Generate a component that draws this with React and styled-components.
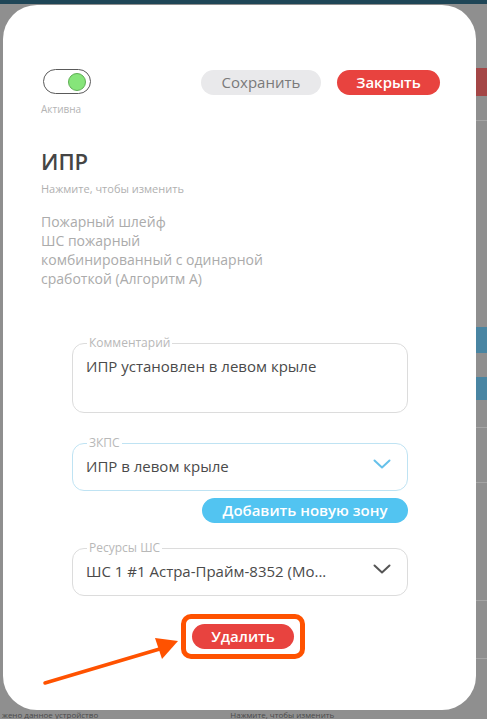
import styled, { createGlobalStyle } from "styled-components";

const GlobalStyle = createGlobalStyle`
  html, body {
    margin: 0;
    padding: 0;
    background: #8f8f8f;
  }
  body {
    font-family: "Open Sans", "Noto Sans", sans-serif;
  }
  * {
    box-sizing: border-box;
  }
`;

function Chevron({ color }) {
  return (
    <svg width="18" height="10" viewBox="0 0 18 10" fill="none">
      <path
        d="M1.5 1.5 L9 8.5 L16.5 1.5"
        stroke={color}
        strokeWidth="2"
        strokeLinecap="round"
        strokeLinejoin="round"
      />
    </svg>
  );
}

function Arrow() {
  return (
    <ArrowLayer width="487" height="719" viewBox="0 0 487 719">
      <line
        x1="45"
        y1="683"
        x2="163"
        y2="648"
        stroke="#ff5200"
        strokeWidth="3.5"
        strokeLinecap="round"
      />
      <polygon points="178,641 155,638 162,659" fill="#ff5200" />
    </ArrowLayer>
  );
}

export default function App() {
  return (
    <>
      <GlobalStyle />
      <Page>
        <Backdrop>
          <TopStrip />
          <BehindRight>
            <BehindTab color="#a83a3a" top={64} height={28} />
            <BehindLine top={24} />
            <BehindTab color="#3d84a6" top={206} height={26} />
            <BehindTab color="#3d84a6" top={24} height={23} />
            <BehindLine top={27} />
            <BehindLine top={54} />
            <BehindLine top={117} />
            <BehindLine top={57} />
          </BehindRight>
          <BehindBottom>
            <span>жено данное устройство</span>
            <span>Нажмите, чтобы изменить</span>
          </BehindBottom>
        </Backdrop>

        <ModalLayer>
          <Modal>
            <HeaderRow>
              <ToggleBlock>
                <Toggle>
                  <Knob />
                </Toggle>
                <SmallLabel>Активна</SmallLabel>
              </ToggleBlock>
              <Actions>
                <PillButton variant="grey" width={120}>
                  Сохранить
                </PillButton>
                <PillButton variant="red" width={103}>
                  Закрыть
                </PillButton>
              </Actions>
            </HeaderRow>

            <Title>ИПР</Title>
            <Hint>Нажмите, чтобы изменить</Hint>
            <Description>
              Пожарный шлейф
              <br />
              ШС пожарный
              <br />
              комбинированный с одинарной
              <br />
              сработкой (Алгоритм А)
            </Description>

            <Fields>
              <Field tall>
                <Legend>Комментарий</Legend>
                <FieldText>ИПР установлен в левом крыле</FieldText>
              </Field>

              <Field active>
                <Legend>ЗКПС</Legend>
                <SelectRow>
                  <FieldText>ИПР в левом крыле</FieldText>
                  <Chevron color="#66c1ea" />
                </SelectRow>
              </Field>
              <AddRow>
                <PillButton variant="blue" width={206}>
                  Добавить новую зону
                </PillButton>
              </AddRow>

              <Field spaced>
                <Legend>Ресурсы ШС</Legend>
                <SelectRow>
                  <FieldText>ШС 1 #1 Астра-Прайм-8352 (Мо...</FieldText>
                  <Chevron color="#555" />
                </SelectRow>
              </Field>

              <DeleteRow>
                <Highlight>
                  <PillButton variant="red" width={102}>
                    Удалить
                  </PillButton>
                </Highlight>
              </DeleteRow>
            </Fields>
          </Modal>
        </ModalLayer>
        <Arrow />
      </Page>
    </>
  );
}

const Page = styled.div`
  position: relative;
  width: 487px;
  height: 719px;
  overflow: hidden;
  display: grid;
  background: #8f8f8f;
`;

const Backdrop = styled.div`
  grid-area: 1 / 1;
  display: flex;
  flex-direction: column;
`;

const TopStrip = styled.div`
  height: 4px;
  background: #1f4657;
`;

const BehindRight = styled.div`
  align-self: flex-end;
  width: 11px;
  display: flex;
  flex-direction: column;
`;

const BehindTab = styled.div`
  margin-top: ${(p) => p.top}px;
  height: ${(p) => p.height}px;
  background: ${(p) => p.color};
  opacity: 0.85;
`;

const BehindLine = styled.div`
  margin-top: ${(p) => p.top}px;
  height: 1px;
  background: #a5a5a5;
`;

const BehindBottom = styled.div`
  margin-top: auto;
  height: 9px;
  display: flex;
  align-items: center;
  gap: 132px;
  padding-left: 2px;
  font-size: 8px;
  line-height: 9px;
  color: #4a4a4a;
`;

const ModalLayer = styled.div`
  grid-area: 1 / 1;
  padding: 5px 0 0 3px;
`;

const Modal = styled.div`
  width: 473px;
  height: 705px;
  background: #ffffff;
  border-radius: 34px;
  padding: 64px 36px 0 38px;
  display: flex;
  flex-direction: column;
`;

const HeaderRow = styled.div`
  display: flex;
  justify-content: space-between;
  align-items: flex-start;
`;

const ToggleBlock = styled.div`
  display: flex;
  flex-direction: column;
  align-items: flex-start;
  padding-left: 2px;
`;

const Toggle = styled.div`
  width: 48px;
  height: 25px;
  border: 1.5px solid #5a5a5a;
  border-radius: 13px;
  display: flex;
  align-items: center;
  justify-content: flex-end;
  padding-right: 4px;
`;

const Knob = styled.div`
  width: 18px;
  height: 18px;
  border-radius: 50%;
  background: #86e57a;
  border: 1.5px solid #5fae55;
`;

const SmallLabel = styled.div`
  margin: 8px 0 0 -2px;
  font-size: 10px;
  line-height: 14px;
  color: #b4b4b4;
`;

const Actions = styled.div`
  display: flex;
  gap: 16px;
  padding-top: 1px;
`;

const colors = {
  grey: { bg: "#e9e9eb", fg: "#7a7a7a", weight: 400 },
  red: { bg: "#e8433f", fg: "#ffffff", weight: 600 },
  blue: { bg: "#52c4f1", fg: "#ffffff", weight: 600 },
};

const PillButton = styled.button`
  width: ${(p) => p.width}px;
  height: 25px;
  border: none;
  border-radius: 13px;
  background: ${(p) => colors[p.variant].bg};
  color: ${(p) => colors[p.variant].fg};
  font-family: "Open Sans", sans-serif;
  font-size: 15px;
  font-weight: ${(p) => colors[p.variant].weight};
  line-height: 25px;
  padding: 0;
  cursor: pointer;
`;

const Title = styled.h1`
  margin: 30px 0 0;
  font-size: 22px;
  font-weight: 600;
  line-height: 30px;
  color: #454545;
`;

const Hint = styled.div`
  margin-top: 6px;
  font-size: 11px;
  line-height: 14px;
  color: #b0b0b0;
`;

const Description = styled.div`
  margin-top: 16px;
  font-size: 14px;
  line-height: 19px;
  color: #ababab;
`;

const Fields = styled.div`
  margin-top: 47px;
  margin-left: 31px;
  width: 336px;
  display: flex;
  flex-direction: column;
`;

const Field = styled.fieldset`
  margin: ${(p) => (p.spaced ? "17px" : p.active ? "22px" : "0")} 0 0;
  min-height: ${(p) => (p.tall ? 78 : 56)}px;
  border: 1.5px solid ${(p) => (p.active ? "#bfe3f3" : "#dcdcdc")};
  border-radius: 12px;
  padding: 0 14px ${(p) => (p.tall ? 30 : 10)}px 13px;
`;

const Legend = styled.legend`
  margin-left: 1px;
  padding: 0 2px;
  font-size: 12px;
  line-height: 16px;
  color: #b8b8b8;
`;

const SelectRow = styled.div`
  display: flex;
  align-items: center;
  justify-content: space-between;
  padding-right: 2px;
`;

const FieldText = styled.div`
  padding-top: 4px;
  font-size: 15px;
  line-height: 22px;
  color: #4a4a4a;
`;

const AddRow = styled.div`
  display: flex;
  justify-content: flex-end;
  margin-top: 7px;
`;

const DeleteRow = styled.div`
  display: flex;
  justify-content: center;
  margin-top: 18px;
  padding-left: 6px;
`;

const Highlight = styled.div`
  border: 5px solid #ff5200;
  border-radius: 10px;
  padding: 5px 6px;
  display: flex;
`;

const ArrowLayer = styled.svg`
  position: absolute;
  left: 0;
  top: 0;
  pointer-events: none;
`;
